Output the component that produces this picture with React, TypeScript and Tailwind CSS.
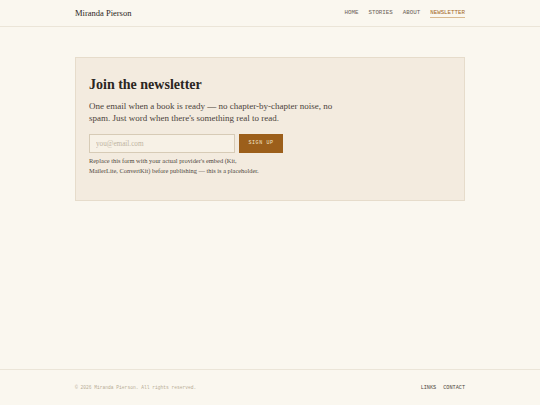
export default function App() {
  const serif = { fontFamily: '"Liberation Serif", "DejaVu Serif", serif' };
  const mono = { fontFamily: '"Liberation Mono", "DejaVu Sans Mono", monospace' };

  return (
    <div className="min-h-[405px] flex flex-col bg-[#faf7ef] text-[#2b2622]">
      {/* Header */}
      <header className="h-[27px] border-b border-[#ebe5d8]">
        <div className="max-w-[390px] mx-auto h-full flex items-center justify-between">
          <span className="text-[8.5px] text-[#2b2622]" style={serif}>
            Miranda Pierson
          </span>
          <nav className="flex items-center gap-[10px] text-[5.8px] text-[#6b6258]" style={mono}>
            <a>HOME</a>
            <a>STORIES</a>
            <a>ABOUT</a>
            <a className="text-[#a3671f] border-b border-[#d9b98f] leading-[8px]">NEWSLETTER</a>
          </nav>
        </div>
      </header>

      {/* Main */}
      <main className="flex-1 pt-[30px]">
        <div className="max-w-[390px] mx-auto">
          <section className="bg-[#f3ebdf] border border-[#e6dccb] px-[13px] pt-[18px] pb-[24px]">
            <h2 className="text-[14px] font-bold leading-[18px] text-[#2b2622]" style={serif}>
              Join the newsletter
            </h2>
            <p className="mt-[6px] text-[9px] leading-[12px] text-[#4b433b] max-w-[260px]" style={serif}>
              One email when a book is ready — no chapter-by-chapter noise, no spam. Just word when there's something real to read.
            </p>
            <form className="mt-[10px] flex gap-[4px]" onSubmit={(e) => e.preventDefault()}>
              <input
                placeholder="you@email.com"
                className="w-[146px] h-[19px] px-[6px] bg-[#f7f1e6] border border-[#d7cbb6] text-[7.2px] placeholder:text-[#bfb4a2] outline-none"
                style={serif}
              />
              <button
                className="w-[44px] h-[19px] bg-[#9c5f1b] text-[#f3e3c8] text-[5px] tracking-[0.12em]"
                style={mono}
              >
                SIGN UP
              </button>
            </form>
            <p className="mt-[3px] text-[6.4px] leading-[10px] text-[#4f4740] whitespace-nowrap" style={serif}>
              Replace this form with your actual provider's embed (Kit,
              <br />
              MailerLite, ConvertKit) before publishing — this is a placeholder.
            </p>
          </section>
        </div>
      </main>

      {/* Footer */}
      <footer className="border-t border-[#ebe5d8] h-[36px]">
        <div className="max-w-[390px] mx-auto h-full pt-[2px] flex items-center justify-between" style={mono}>
          <span className="text-[4.6px] text-[#b8ad96]">© 2026 Miranda Pierson. All rights reserved.</span>
          <div className="flex gap-[7px] text-[5.2px] text-[#4f4740]">
            <a>LINKS</a>
            <a>CONTACT</a>
          </div>
        </div>
      </footer>
    </div>
  );
}
